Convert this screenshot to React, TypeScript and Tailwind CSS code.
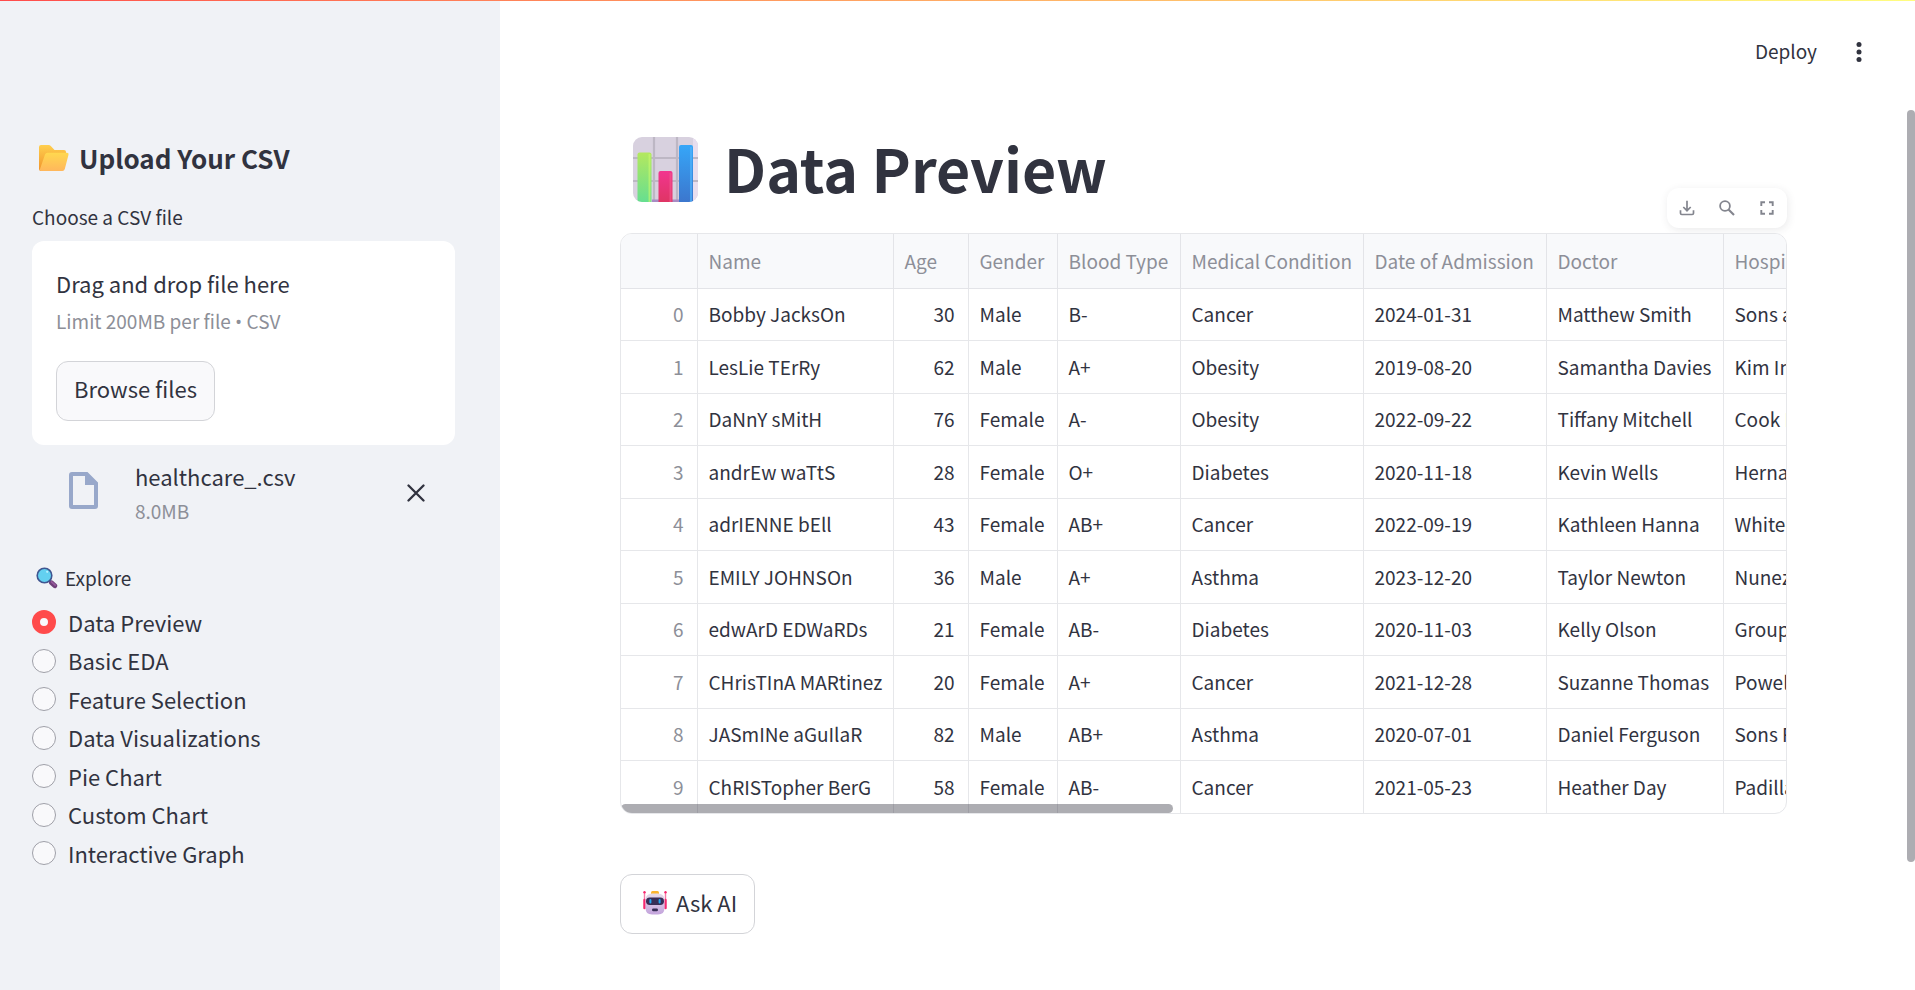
const columns = ["Name", "Age", "Gender", "Blood Type", "Medical Condition", "Date of Admission", "Doctor", "Hospital"];

const rows: string[][] = [
  ["Bobby JacksOn", "30", "Male", "B-", "Cancer", "2024-01-31", "Matthew Smith", "Sons and Miller"],
  ["LesLie TErRy", "62", "Male", "A+", "Obesity", "2019-08-20", "Samantha Davies", "Kim Inc"],
  ["DaNnY sMitH", "76", "Female", "A-", "Obesity", "2022-09-22", "Tiffany Mitchell", "Cook PLC"],
  ["andrEw waTtS", "28", "Female", "O+", "Diabetes", "2020-11-18", "Kevin Wells", "Hernandez Rogers"],
  ["adrIENNE bEll", "43", "Female", "AB+", "Cancer", "2022-09-19", "Kathleen Hanna", "White-White"],
  ["EMILY JOHNSOn", "36", "Male", "A+", "Asthma", "2023-12-20", "Taylor Newton", "Nunez-Humphrey"],
  ["edwArD EDWaRDs", "21", "Female", "AB-", "Diabetes", "2020-11-03", "Kelly Olson", "Group Middleton"],
  ["CHrisTInA MARtinez", "20", "Female", "A+", "Cancer", "2021-12-28", "Suzanne Thomas", "Powell Robinson"],
  ["JASmINe aGuIlaR", "82", "Male", "AB+", "Asthma", "2020-07-01", "Daniel Ferguson", "Sons Rich and"],
  ["ChRISTopher BerG", "58", "Female", "AB-", "Cancer", "2021-05-23", "Heather Day", "Padilla-Walker"],
];

const pages = [
  "Data Preview",
  "Basic EDA",
  "Feature Selection",
  "Data Visualizations",
  "Pie Chart",
  "Custom Chart",
  "Interactive Graph",
];

function FolderIcon() {
  return (
    <svg viewBox="0 0 30 27" className="h-[27px] w-[30px]" aria-hidden="true">
      <defs>
        <linearGradient id="folderBack" x1="0" y1="0" x2="0" y2="1">
          <stop offset="0" stopColor="#ffcf4e" />
          <stop offset="1" stopColor="#f0932b" />
        </linearGradient>
        <linearGradient id="folderFront" x1="0" y1="0" x2="0" y2="1">
          <stop offset="0" stopColor="#ffd84f" />
          <stop offset="1" stopColor="#ffb75c" />
        </linearGradient>
      </defs>
      <path d="M0 2 Q0 0 2 0 H9.500 Q11 0 12 1.200 L15.500 5 H25 Q27 5 27 7 V10 L5 26 H2 Q0 26 0 24 Z" fill="url(#folderBack)" />
      <path d="M8.500 7.800 H28 Q30 7.800 29.500 9.800 L25.800 24 Q25.200 26 23.400 26 H2 Q.2 26 1 24 L6 9.600 Q6.700 7.800 8.500 7.800 Z" fill="url(#folderFront)" />
    </svg>
  );
}

function MagnifierIcon() {
  return (
    <svg viewBox="0 0 22 22" className="h-[22px] w-[22px]" aria-hidden="true">
      <path d="M13.500 14 L15.500 15.800" stroke="#4b4a8c" strokeWidth="2.600" />
      <path d="M15.500 15.800 L18.800 18.800" stroke="#6f4079" strokeWidth="4.800" strokeLinecap="round" />
      <path d="M15.500 14.800 L19.200 18.200" stroke="#96599c" strokeWidth="1.600" strokeLinecap="round" />
      <circle cx="8.500" cy="8.500" r="7.300" fill="#63d0f0" stroke="#3f5590" strokeWidth="1.600" />
      <circle cx="11.200" cy="4.800" r="1.100" fill="#b9f0ff" />
    </svg>
  );
}

function ChartIcon() {
  return (
    <svg viewBox="0 0 65 65" className="h-[65px] w-[65px]" aria-hidden="true">
      <defs>
        <linearGradient id="barGreen" x1="0" y1="0" x2="0" y2="1">
          <stop offset="0" stopColor="#b4e85e" />
          <stop offset="1" stopColor="#62de93" />
        </linearGradient>
        <linearGradient id="barPink" x1="0" y1="0" x2="0" y2="1">
          <stop offset="0" stopColor="#f2358f" />
          <stop offset="1" stopColor="#dd3560" />
        </linearGradient>
        <linearGradient id="barBlue" x1="0" y1="0" x2="0" y2="1">
          <stop offset="0" stopColor="#36a6f8" />
          <stop offset="1" stopColor="#3c74cb" />
        </linearGradient>
        <clipPath id="chartCard">
          <rect width="65" height="65" rx="9" />
        </clipPath>
      </defs>
      <g clipPath="url(#chartCard)">
        <rect width="65" height="65" fill="#d8d1df" />
        <rect x="60" width="5" height="65" fill="#e8deee" />
        <path d="M21 0 V65 M44 0 V65 M0 21 H65 M0 44 H65" stroke="#bdb7c4" strokeWidth="2.200" />
        <rect x="19" y="62.500" width="28" height="2.500" fill="#a88cc4" />
        <rect x="4.500" y="15.500" width="14" height="52" rx="2" fill="url(#barGreen)" />
        <rect x="15.500" y="17" width="2" height="48" fill="#c9fa6c" opacity=".6" />
        <rect x="25.500" y="34" width="14" height="34" rx="2" fill="url(#barPink)" />
        <rect x="36.500" y="36" width="2" height="30" fill="#f2558c" opacity=".7" />
        <rect x="46" y="8" width="14" height="60" rx="2" fill="url(#barBlue)" />
        <rect x="57" y="10" width="2" height="56" fill="#52b4fb" opacity=".7" />
      </g>
    </svg>
  );
}

function RobotIcon() {
  return (
    <svg viewBox="0 0 24 24" className="h-6 w-6" aria-hidden="true">
      <defs>
        <linearGradient id="robotHead" x1="0" y1="0" x2="0" y2="1">
          <stop offset="0" stopColor="#e6dcea" />
          <stop offset="1" stopColor="#c3a3dc" />
        </linearGradient>
      </defs>
      <path d="M1.500 1 V18 M22.500 1 V18" stroke="#f77ba6" strokeWidth="1.400" />
      <path d="M1.500 9 V17 M22.500 9 V17" stroke="#f5296f" strokeWidth="2.400" strokeLinecap="round" />
      <circle cx="1.500" cy="1.200" r="1.200" fill="#f5296f" />
      <circle cx="22.500" cy="1.200" r="1.200" fill="#f5296f" />
      <rect x="8" y="0" width="8" height="5" rx="1.500" fill="#fbb52d" />
      <path d="M2.500 9 Q2.500 2.500 9 2.500 H15 Q21.500 2.500 21.500 9 V17 Q21.500 23.500 15 23.500 H9 Q2.500 23.500 2.500 17 Z" fill="url(#robotHead)" />
      <rect x="3" y="6.500" width="18" height="7.500" rx="3.700" fill="#372d56" />
      <rect x="6.400" y="8" width="2" height="4.400" rx="1" fill="#22a7f2" />
      <rect x="15.600" y="8" width="2" height="4.400" rx="1" fill="#22a7f2" />
      <rect x="9" y="17.500" width="6" height="2.800" rx="1.400" fill="#372d56" />
    </svg>
  );
}

function Sidebar() {
  return (
    <aside className="w-[500px] shrink-0 bg-[#f0f2f6] pt-[136px] pr-[45px] pl-8">
      <h2 className="flex items-center gap-[10px] pl-[7px] text-[26px] leading-[44px] font-bold">
        <FolderIcon />
        Upload Your CSV
      </h2>

      <label htmlFor="csv" className="mt-[21px] block text-[19px] leading-8">
        Choose a CSV file
      </label>
      <div className="mt-2 rounded-xl bg-white px-6 pt-[23px] pb-6">
        <p className="text-[22px] leading-[38px]">Drag and drop file here</p>
        <p className="text-[19px] leading-[38px] text-[#8d8f98]">
          Limit 200MB per file <span className="font-['Open_Sans',sans-serif]">•</span> CSV
        </p>
        <button
          id="csv"
          type="button"
          className="mt-5 h-[60px] rounded-xl border border-[#d3d4d8] bg-[#f9f9fb] px-[17px] pb-[5px] text-[22px]"
        >
          Browse files
        </button>
      </div>

      <div className="flex items-start pt-[14px] pr-[30px] pb-[33px] pl-[37px]">
        <svg viewBox="0 0 29 37" className="mt-[13px] h-[37px] w-[29px] shrink-0" aria-hidden="true">
          <path
            fillRule="evenodd"
            d="M3 0 H18.500 L29 10.500 V34 Q29 37 26 37 H3 Q0 37 0 34 V3 Q0 0 3 0 Z M4 4 V33 H25 V13 H16 V4 Z"
            fill="#98a8ca"
          />
        </svg>
        <div className="grow pl-[37px]">
          <p className="text-[22px] leading-[34px]">healthcare_.csv</p>
          <p className="text-[19px] leading-9 text-[#8d8f98]">8.0MB</p>
        </div>
        <button type="button" aria-label="Remove file" className="mt-[25px]">
          <svg viewBox="0 0 18 18" className="size-[18px]" aria-hidden="true">
            <path d="M1.500 1.500 L16.500 16.500 M16.500 1.500 L1.500 16.500" stroke="#31333f" strokeWidth="2.300" strokeLinecap="round" />
          </svg>
        </button>
      </div>

      <fieldset>
        <legend className="flex items-center gap-[7px] pl-1 text-[19px] leading-8">
          <MagnifierIcon />
          Explore
        </legend>
        <div className="mt-4 flex h-[255px] flex-col justify-between">
          {pages.map((page, i) => (
            <label key={page} className="flex h-6 items-center gap-3 text-[22px]">
              <input
                type="radio"
                name="page"
                defaultChecked={i === 0}
                className="size-6 appearance-none rounded-full border-[1px] border-[#9fa0a8] bg-[#f9f9fb] checked:border-8 checked:border-[#ff4b4b]"
              />
              {page}
            </label>
          ))}
        </div>
      </fieldset>
    </aside>
  );
}

function TableToolbar() {
  return (
    <div className="absolute right-0 bottom-full mb-[5px] flex h-10 items-center gap-[10px] rounded-xl bg-white px-[5px] shadow-[1px_2px_8px_rgba(49,51,63,0.1)]">
      <button type="button" aria-label="Download as CSV" className="flex size-[30px] items-center justify-center">
        <svg viewBox="0 0 16 16" className="size-4" fill="none" stroke="#83858e" strokeWidth="1.700" aria-hidden="true">
          <path d="M8 .8 V10.500 M4.300 7 L8 10.700 L11.700 7 M1.500 10.300 V13.200 Q1.500 14.500 2.800 14.500 H13.200 Q14.500 14.500 14.500 13.200 V10.300" />
        </svg>
      </button>
      <button type="button" aria-label="Search" className="flex size-[30px] items-center justify-center">
        <svg viewBox="0 0 16 16" className="size-4" fill="none" stroke="#83858e" aria-hidden="true">
          <circle cx="6" cy="6" r="4.900" strokeWidth="1.800" />
          <path d="M9.500 9.500 L15 15" strokeWidth="2.100" />
        </svg>
      </button>
      <button type="button" aria-label="Fullscreen" className="flex size-[30px] items-center justify-center">
        <svg viewBox="0 0 14 14" className="size-[14px]" fill="none" stroke="#83858e" strokeWidth="1.900" aria-hidden="true">
          <path d="M1.300 5 V1.300 H5 M9 1.300 H12.700 V5 M12.700 9 V12.700 H9 M5 12.700 H1.300 V9" />
        </svg>
      </button>
    </div>
  );
}

function DataTable() {
  return (
    <div className="relative mt-[19px]">
      <TableToolbar />
      <div className="relative overflow-hidden rounded-xl border border-[#e6e7ea]">
        <table className="w-[1320px] table-fixed border-collapse text-left text-[19px] leading-7 whitespace-nowrap">
          <colgroup>
            <col className="w-[76px]" />
            <col className="w-[196px]" />
            <col className="w-[75px]" />
            <col className="w-[89px]" />
            <col className="w-[123px]" />
            <col className="w-[183px]" />
            <col className="w-[183px]" />
            <col className="w-[177px]" />
            <col />
          </colgroup>
          <thead>
            <tr className="h-[54px] bg-[#f8f9fb] text-[#8d8f98]">
              <td className="border-r border-b border-[#e3e4e8]" />
              {columns.map((c) => (
                <th key={c} scope="col" className="border-r border-b border-[#e3e4e8] px-[11px] font-normal">
                  {c}
                </th>
              ))}
            </tr>
          </thead>
          <tbody>
            {rows.map((r, i) => (
              <tr key={r[0]} className="border-b border-[#e6e7ea] last:border-b-0 odd:h-[52px] even:h-[53px]">
                <td className="border-r border-[#e6e7ea] px-[13px] text-right text-[#8d8f98]">{i}</td>
                {r.map((v, j) => (
                  <td
                    key={columns[j]}
                    className={j === 1 ? "border-r border-[#e6e7ea] px-[13px] text-right" : "border-r border-[#e6e7ea] px-[11px]"}
                  >
                    {v}
                  </td>
                ))}
              </tr>
            ))}
          </tbody>
        </table>
        <div className="absolute bottom-0 left-0 h-[9px] w-[552px] rounded-full bg-[#31333f]/40" />
      </div>
    </div>
  );
}

export default function App() {
  return (
    <div className="relative flex min-h-screen bg-white font-['Noto_Sans_CJK_SC',sans-serif] text-[#31333f]">
      <div className="absolute inset-x-0 top-0 h-px bg-linear-to-r from-[#ff4b4b] to-[#fffd80]" />
      <Sidebar />
      <main className="min-w-0 grow">
        <header className="flex h-[104px] items-center justify-end gap-[39px] pr-[53px]">
          <button type="button" className="pb-px text-[19px]">Deploy</button>
          <button type="button" aria-label="Main menu">
            <svg viewBox="0 0 6 20" className="h-5 w-[6px]" fill="#31333f" aria-hidden="true">
              <circle cx="3" cy="2.500" r="2.500" />
              <circle cx="3" cy="10" r="2.500" />
              <circle cx="3" cy="17.500" r="2.500" />
            </svg>
          </button>
        </header>
        <div className="pt-5 pr-[128px] pl-[120px]">
          <h1 className="flex items-center gap-[26px] pl-[13px] text-[59px] leading-[88px] font-bold">
            <ChartIcon />
            <span className="pb-0.5">Data Preview</span>
          </h1>
          <DataTable />
          <button
            type="button"
            className="mt-[60px] flex h-[60px] items-center gap-[9px] rounded-xl border border-[#d3d4d8] pr-[17px] pb-[3px] pl-[22px] text-[22px]"
          >
            <RobotIcon />
            Ask AI
          </button>
        </div>
      </main>
      <div className="absolute top-[110px] right-0 h-[752px] w-2 rounded-full bg-[#adadb2]" />
    </div>
  );
}
